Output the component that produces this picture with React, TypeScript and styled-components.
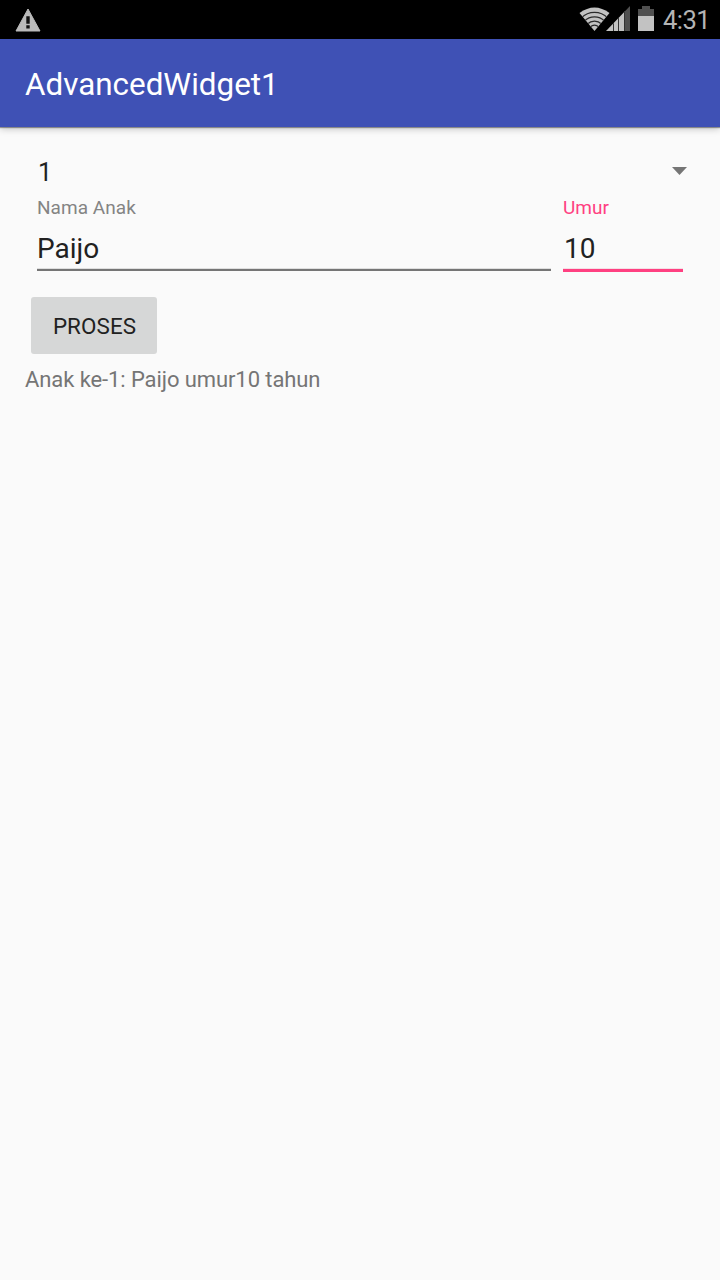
import React from 'react';
import styled, { createGlobalStyle } from 'styled-components';

const GlobalStyle = createGlobalStyle`
  * { box-sizing: border-box; }
  body { margin: 0; background: #fafafa; font-family: Roboto, sans-serif; }
`;

const Screen = styled.div`
  width: 720px;
  height: 1280px;
  overflow: hidden;
  background: #fafafa;
`;

const StatusBar = styled.header`
  display: flex;
  align-items: center;
  justify-content: space-between;
  height: 39px;
  padding: 0 11px 0 14px;
  background: #000;
`;

const StatusIcons = styled.div`
  display: flex;
  align-items: center;
`;

const Clock = styled.span`
  width: 46px;
  margin-left: 8px;
  padding-top: 2px;
  font-size: 25.6px;
  letter-spacing: -0.6px;
  line-height: 37px;
  white-space: nowrap;
  color: #b4b4b4;
`;

const AppBar = styled.div`
  display: flex;
  align-items: center;
  height: 88px;
  padding: 4px 25px 0;
  background: #3f51b5;
  box-shadow: 0 1px 1px rgba(0, 0, 0, 0.36), 0 2px 7px rgba(0, 0, 0, 0.22);
`;

const Title = styled.h1`
  margin: 0;
  font-size: 31.4px;
  font-weight: 400;
  line-height: 38px;
  color: #fff;
`;

const Content = styled.main`
  padding: 25px 25px 0;
`;

const Spinner = styled.div`
  display: flex;
  align-items: center;
  justify-content: space-between;
  height: 38px;
  padding: 0 8px 0 13px;
`;

const Selected = styled.span`
  padding-top: 4px;
  font-size: 25px;
  line-height: 30px;
  color: #212121;
`;

const Fields = styled.div`
  display: flex;
  align-items: flex-start;
  gap: 12px;
  height: 82px;
  padding: 6px 12px 0;
`;

const Field = styled.label<{ $width: number; $active?: boolean }>`
  display: flex;
  flex-direction: column;
  width: ${p => p.$width}px;
  height: ${p => (p.$active ? 76 : 75)}px;
  color: ${p => (p.$active ? '#ff4081' : '#848484')};
  border-bottom: ${p => (p.$active ? '3px solid #ff4081' : '2px solid #757575')};
  box-shadow: inset 0 -1px 0 ${p => (p.$active ? '#f4dfe6' : '#dedede')};
`;

const Label = styled.span`
  font-size: 19px;
  letter-spacing: 0.04px;
  line-height: 23px;
`;

const Value = styled.span<{ $numeric?: boolean }>`
  margin-top: 13px;
  padding-left: ${p => (p.$numeric ? 1 : 0)}px;
  font-size: 28px;
  line-height: 34px;
  color: #212121;
`;

const Button = styled.button`
  display: block;
  width: 126px;
  height: 57px;
  margin: 25px 0 0 6px;
  padding: 1px 0 0 1px;
  border: 0;
  border-radius: 3px;
  background: #d6d7d7;
  font: 400 22.4px Roboto, sans-serif;
  letter-spacing: 0.1px;
  color: #212121;
`;

const Result = styled.p`
  margin: 12px 0 0;
  font-size: 22px;
  letter-spacing: -0.09px;
  line-height: 27px;
  color: #757575;
`;

const WarningIcon = () => (
  <svg width="28" height="26" viewBox="0 0 28 26">
    <path d="M14 2 26 24H2Z" fill="#bababa" stroke="#bababa" strokeLinejoin="round" />
    <path d="M12.3 9.3h3.4v7.4h-3.4zM12.3 18.3h3.4v3.2h-3.4z" fill="#111" />
  </svg>
);

const SignalIcons = () => (
  <svg width="76" height="39" viewBox="0 0 76 39">
    <clipPath id="wifi"><path d="M0.5 13Q15.5 2 30.5 13L15.5 31Z" /></clipPath>
    <clipPath id="cell"><path d="M27 31 51 6V31Z" /></clipPath>
    <g clipPath="url(#wifi)">
      <path d="M0 0h31v32H0z" fill="#c2c2c2" />
      <g fill="none" stroke="#2a2a2a" strokeWidth="1.2">
        <circle cx="15.5" cy="31" r="18.6" />
        <circle cx="15.5" cy="31" r="14.2" />
        <circle cx="15.5" cy="31" r="9.9" />
        <circle cx="15.5" cy="31" r="5.8" />
      </g>
    </g>
    <g clipPath="url(#cell)">
      <path d="M27 6h19v25H27z" fill="#c2c2c2" />
      <path d="M46 6h5v25h-5z" fill="#505050" />
      <path d="M34.5 6v25M39.5 6v25M45.5 6v25" stroke="#333" strokeWidth="1" />
    </g>
    <path d="M63 6h8v3h4v7H59V9h4z" fill="#505050" />
    <path d="M59 16h16v15H59z" fill="#c2c2c2" />
  </svg>
);

export default function App() {
  return (
    <Screen>
      <GlobalStyle />
      <StatusBar>
        <WarningIcon />
        <StatusIcons>
          <SignalIcons />
          <Clock>4:31</Clock>
        </StatusIcons>
      </StatusBar>
      <AppBar><Title>AdvancedWidget1</Title></AppBar>
      <Content>
        <Spinner>
          <Selected>1</Selected>
          <svg width="15" height="8" viewBox="0 0 15 8"><path d="M0 0h15L7.5 8Z" fill="#757575" /></svg>
        </Spinner>
        <Fields>
          <Field $width={514}><Label>Nama Anak</Label><Value>Paijo</Value></Field>
          <Field $width={120} $active><Label>Umur</Label><Value $numeric>10</Value></Field>
        </Fields>
        <Button>PROSES</Button>
        <Result>Anak ke-1: Paijo umur10 tahun</Result>
      </Content>
    </Screen>
  );
}
